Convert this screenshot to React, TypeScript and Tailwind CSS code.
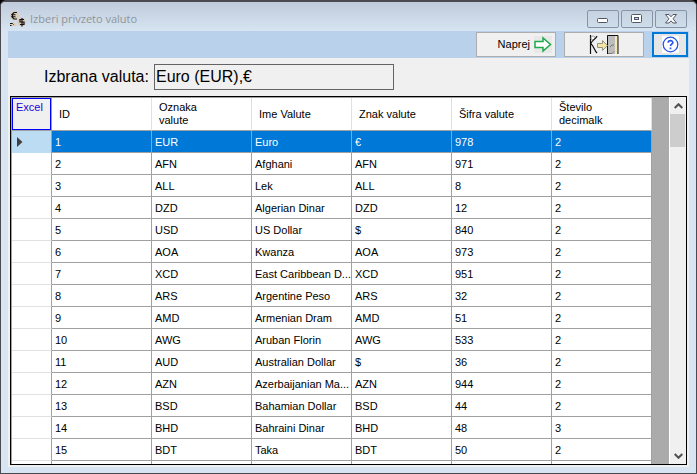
import type { ReactNode } from "react";

type Currency = { id: number; code: string; name: string; sign: string; num: string; decimals: number };

const rows: Currency[] = [
  { id: 1, code: "EUR", name: "Euro", sign: "€", num: "978", decimals: 2 },
  { id: 2, code: "AFN", name: "Afghani", sign: "AFN", num: "971", decimals: 2 },
  { id: 3, code: "ALL", name: "Lek", sign: "ALL", num: "8", decimals: 2 },
  { id: 4, code: "DZD", name: "Algerian Dinar", sign: "DZD", num: "12", decimals: 2 },
  { id: 5, code: "USD", name: "US Dollar", sign: "$", num: "840", decimals: 2 },
  { id: 6, code: "AOA", name: "Kwanza", sign: "AOA", num: "973", decimals: 2 },
  { id: 7, code: "XCD", name: "East Caribbean D...", sign: "XCD", num: "951", decimals: 2 },
  { id: 8, code: "ARS", name: "Argentine Peso", sign: "ARS", num: "32", decimals: 2 },
  { id: 9, code: "AMD", name: "Armenian Dram", sign: "AMD", num: "51", decimals: 2 },
  { id: 10, code: "AWG", name: "Aruban Florin", sign: "AWG", num: "533", decimals: 2 },
  { id: 11, code: "AUD", name: "Australian Dollar", sign: "$", num: "36", decimals: 2 },
  { id: 12, code: "AZN", name: "Azerbaijanian Ma...", sign: "AZN", num: "944", decimals: 2 },
  { id: 13, code: "BSD", name: "Bahamian Dollar", sign: "BSD", num: "44", decimals: 2 },
  { id: 14, code: "BHD", name: "Bahraini Dinar", sign: "BHD", num: "48", decimals: 3 },
  { id: 15, code: "BDT", name: "Taka", sign: "BDT", num: "50", decimals: 2 },
];

const headers = [
  ["ID"],
  ["Oznaka", "valute"],
  ["Ime Valute"],
  ["Znak valute"],
  ["Šifra valute"],
  ["Število", "decimalk"],
];

function CurrencyIcon() {
  return (
    <svg width="16" height="16" viewBox="0 0 16 16" aria-hidden="true">
      <circle cx="4.500" cy="4.500" r="4.500" fill="#dccdbb" />
      <circle cx="11.500" cy="11" r="4.500" fill="#dccdbb" />
      <path d="M0 15c0-3 2-4 4-4l3 4z" fill="#dccdbb" />
      <path d="M7 1.500H4L2.500 3v3.500L4 8h3M1 3.800h4.500M1 5.700h4.500" fill="none" stroke="#111" strokeWidth="1.100" />
      <path d="M14 8.500h-4v2.500h4v2.500h-4M12 7v8.500" fill="none" stroke="#111" strokeWidth="1.200" />
      <path d="M0 12.500h2.500l1 1M0 14.500h1.500" fill="none" stroke="#111" />
    </svg>
  );
}

function ForwardIcon() {
  return (
    <svg width="18" height="17" viewBox="0 0 18 17" aria-hidden="true">
      <rect width="18" height="17" fill="#e8e8e8" />
      <path d="M1 5.500h8V2l7.500 6.500L9 15v-3.500H1z" fill="#fff" stroke="#1faa4b" strokeWidth="1.500" />
    </svg>
  );
}

function ExitIcon() {
  return (
    <svg width="30" height="21" viewBox="0 0 30 21" aria-hidden="true">
      <path d="M1.500 1v19" stroke="#111" strokeWidth="1.200" />
      <circle cx="4" cy="4" r="2" fill="#fff" stroke="#999" />
      <path d="M8 2C7 5 3 6 2 9.500M2 10c3 2 3 6 6 9" fill="none" stroke="#111" strokeWidth="1.200" />
      <path d="M18 1h11v19H18z" fill="#bdbdbd" />
      <path d="M26 2h2.500v18H26z" fill="#f5e6b3" />
      <path d="M18.500 20V1.500h10.500V20" fill="none" stroke="#111" />
      <path d="M8.500 9.500h5v-3l5 5-5 5v-3h-5z" fill="#f3e4a9" stroke="#99937a" />
      <path d="M19 19.500h4l2-2M21 13l2-2h2" fill="none" stroke="#777" />
    </svg>
  );
}

function HelpIcon() {
  return (
    <svg width="17" height="17" viewBox="0 0 17 17" aria-hidden="true">
      <rect width="17" height="17" fill="#fff" />
      <circle cx="8.500" cy="8.500" r="7.300" fill="none" stroke="#2454e8" strokeWidth="1.300" />
      <path d="M6.200 6.800C6.200 4 10.800 4 10.800 6.500c0 1.600-2.300 1.800-2.300 3.500M8.500 11.500v1.700" fill="none" stroke="#2454e8" strokeWidth="1.700" />
    </svg>
  );
}

function CaptionButton({ label, children }: { label: string; children: ReactNode }) {
  return (
    <button
      type="button"
      aria-label={label}
      className="flex h-[18px] w-8 items-center justify-center rounded-xs border border-[#8794a8] bg-linear-to-b from-[#c5d2e0] to-[#cfdcea]"
    >
      {children}
    </button>
  );
}

function ScrollArrow({ d }: { d: string }) {
  return (
    <svg width="9" height="6" viewBox="0 0 9 6" aria-hidden="true">
      <path d={d} fill="none" stroke="#505050" strokeWidth="2" />
    </svg>
  );
}

export default function App() {
  return (
    <div className="h-screen bg-black font-['Liberation_Sans',Arial,sans-serif]">
      <div className="flex h-full flex-col rounded-t-md border border-t-2 border-[#4a4a50] bg-[#d7e4f2] px-[7px] pb-[6px]">
        <header className="-mx-[7px] flex h-[29px] shrink-0 items-center rounded-t-sm bg-linear-to-b from-[#bfcbda] to-[#d7e4f2] px-[9px] pt-1">
          <CurrencyIcon />
          <h1 className="ml-1 flex-1 font-['Open_Sans','Noto_Sans',sans-serif] text-[11px] leading-4 text-[#909499]">
            Izberi privzeto valuto
          </h1>
          <div className="flex gap-0.5">
            <CaptionButton label="Minimiziraj">
              <svg width="12" height="6" viewBox="0 0 12 6" className="mt-1">
                <rect x=".5" y=".5" width="10" height="4" rx="1" fill="#fff" stroke="#535666" />
              </svg>
            </CaptionButton>
            <CaptionButton label="Maksimiraj">
              <svg width="12" height="10" viewBox="0 0 12 10">
                <rect x=".5" y=".5" width="10" height="8" rx="1" fill="#fff" stroke="#535666" />
                <rect x="3.500" y="3.500" width="4" height="2" fill="#c9d6e4" stroke="#535666" />
              </svg>
            </CaptionButton>
            <CaptionButton label="Zapri">
              <svg width="12" height="10" viewBox="0 0 12 10">
                <path
                  d="M.5.5h3.500l2 2.300L8 .5h3.500L8 4.800l3.500 4.200H8L6 6.800 4 9H.5L4 4.800z"
                  fill="#fff"
                  stroke="#535666"
                />
              </svg>
            </CaptionButton>
          </div>
        </header>

        <main className="flex min-h-0 flex-1 flex-col bg-[#f0f0f0]">
          <div className="flex h-[27px] shrink-0 items-center justify-end gap-2 bg-[#b9d1ea] pr-px">
            <button
              type="button"
              className="flex h-[25px] w-20 items-center justify-end gap-1 border border-[#adadad] bg-[#f0f0f0] pr-[3px] text-[11px] text-black"
            >
              Naprej
              <ForwardIcon />
            </button>
            <button
              type="button"
              aria-label="Izhod"
              className="flex h-[25px] w-20 items-center justify-center border border-[#adadad] bg-[#f0f0f0]"
            >
              <ExitIcon />
            </button>
            <button
              type="button"
              aria-label="Pomoč"
              className="flex h-[25px] w-9 items-center justify-center border-2 border-[#0078d7] bg-[#e6e6e6]"
            >
              <HelpIcon />
            </button>
          </div>

          <div className="flex shrink-0 items-center gap-[5px] py-1.5 pl-9">
            <label htmlFor="currency" className="text-base leading-6">
              Izbrana valuta:
            </label>
            <input
              id="currency"
              readOnly
              value="Euro (EUR),€"
              className="h-[26px] w-60 border border-[#646464] bg-[#f0f0f0] px-px text-base leading-6 text-black outline-none"
            />
          </div>

          <div className="mx-0.5 mb-0.5 flex min-h-0 flex-1 border border-black bg-[#ababab]">
            <div className="min-w-0 flex-1 overflow-hidden border-t border-l border-[#a0a0a0]">
              <table className="w-160 table-fixed border-separate border-spacing-0 text-left text-[11px] text-black">
                <colgroup>
                  <col className="w-10" />
                  {headers.map((h) => (
                    <col key={h[0]} className="w-25" />
                  ))}
                </colgroup>
                <thead>
                  <tr className="h-[33px] bg-white">
                    <th className="border-r border-b border-[#a0a0a0] p-0 font-normal">
                      <button
                        type="button"
                        className="block h-8 w-full border border-[#0000ff] bg-[#f0f0f0] px-[3px] pb-3.5 text-left text-[11px] leading-4 text-[#2000e0]"
                      >
                        Excel
                      </button>
                    </th>
                    {headers.map((h) => (
                      <th
                        key={h[0]}
                        scope="col"
                        className="border-r border-b border-r-[#e0e0e0] border-b-[#a0a0a0] py-0 pr-0 pl-[7px] leading-[13px] font-normal whitespace-nowrap"
                      >
                        {h.map((line) => (
                          <span key={line} className="block">
                            {line}
                          </span>
                        ))}
                      </th>
                    ))}
                  </tr>
                </thead>
                <tbody>
                  {rows.map((r) => {
                    const selected = r.id === 1;
                    return (
                      <tr key={r.id} className={selected ? "h-[22px] bg-[#0078d7] text-white" : "h-[22px] bg-white"}>
                        <td
                          className={
                            selected
                              ? "border-r border-r-[#a0a0a0] bg-[#bcdcf4] p-0"
                              : "border-r border-b border-r-[#a0a0a0] border-b-[#e2e2e2] p-0"
                          }
                        >
                          {selected && (
                            <svg width="6" height="10" viewBox="0 0 6 10" className="ml-[5px]" aria-hidden="true">
                              <path d="M0 0l5.500 5L0 10z" fill="#404040" />
                            </svg>
                          )}
                        </td>
                        {[r.id, r.code, r.name, r.sign, r.num, r.decimals].map((v, i) => (
                          <td
                            key={i}
                            className="border-r border-b border-[#a0a0a0] py-0 pr-0 pl-[3px] leading-4 whitespace-nowrap"
                          >
                            {v}
                          </td>
                        ))}
                      </tr>
                    );
                  })}
                  <tr className="h-[22px] bg-white" aria-hidden="true">
                    <td className="border-r border-[#a0a0a0] p-0" />
                    {headers.map((h) => (
                      <td key={h[0]} className="border-r border-[#a0a0a0] p-0" />
                    ))}
                  </tr>
                </tbody>
              </table>
            </div>
            <div className="flex w-[17px] shrink-0 flex-col items-center border-l border-white bg-[#f0f0f0]" aria-hidden="true">
              <div className="flex h-[17px] items-center">
                <ScrollArrow d="M.7 5l3.800-3.800L8.300 5" />
              </div>
              <div className="mr-px h-[33px] w-[15px] bg-[#cdcdcd]" />
              <div className="flex-1" />
              <div className="flex h-[17px] items-center">
                <ScrollArrow d="M.7 1l3.800 3.800L8.300 1" />
              </div>
            </div>
          </div>
        </main>
      </div>
    </div>
  );
}
